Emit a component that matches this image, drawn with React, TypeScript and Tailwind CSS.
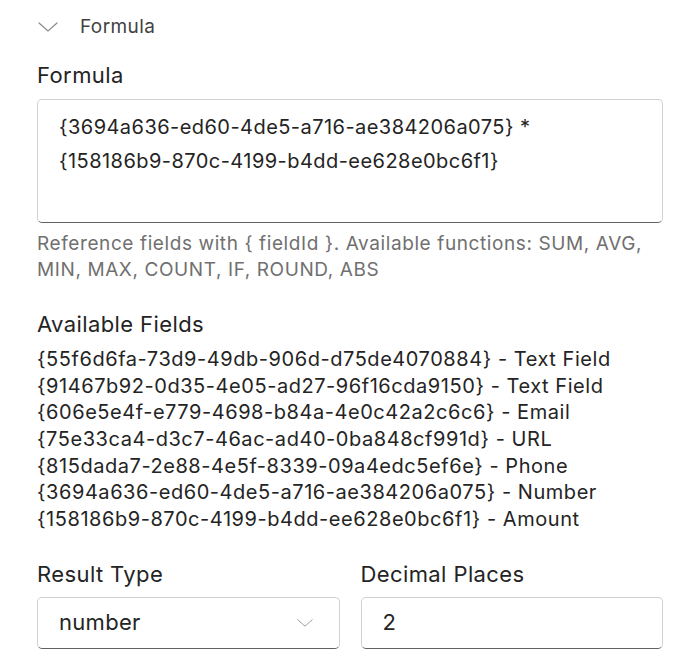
import React from 'react';

const FIELDS: [string, string][] = [
  ['55f6d6fa-73d9-49db-906d-d75de4070884', 'Text Field'],
  ['91467b92-0d35-4e05-ad27-96f16cda9150', 'Text Field'],
  ['606e5e4f-e779-4698-b84a-4e0c42a2c6c6', 'Email'],
  ['75e33ca4-d3c7-46ac-ad40-0ba848cf991d', 'URL'],
  ['815dada7-2e88-4e5f-8339-09a4edc5ef6e', 'Phone'],
  ['3694a636-ed60-4de5-a716-ae384206a075', 'Number'],
  ['158186b9-870c-4199-b4dd-ee628e0bc6f1', 'Amount'],
];

const HINT = 'Reference fields with { fieldId }. Available functions: SUM, AVG, MIN, MAX, COUNT, IF, ROUND, ABS';

function Chevron({className}: {className?: string}) {
  return (
    <svg viewBox="0 0 20 10" fill="none" stroke="currentColor" strokeWidth="1.2" strokeLinecap="round" className={className} aria-hidden="true">
      <path d="M1 1l9 8 9-8" />
    </svg>
  );
}

export default function App() {
  return (
    <div className="min-h-screen w-[700px] bg-white px-[37px] font-['Inter',sans-serif] text-[#242424]">
      {/* section header */}
      <div className="flex h-[54px] items-center gap-[22px]">
        <Chevron className="ml-[1px] h-[10px] w-[20px] text-[#8a8a8a]" />
        <span className="text-[19px] tracking-[0.4px] text-[#424242]">Formula</span>
      </div>

      <label className="block text-[22px] leading-[42px] tracking-[0.4px]">Formula</label>
      <div className="mt-[3px] h-[124px] rounded-[5px] border border-[#d1d1d1] border-b-[#616161] px-[21px] pt-[10px] text-[20px] leading-[34px] tracking-[0.45px]">
        {'{3694a636-ed60-4de5-a716-ae384206a075} *'}
        <br />
        {'{158186b9-870c-4199-b4dd-ee628e0bc6f1}'}
      </div>
      <p className="mt-[8px] text-[19px] leading-[26px] tracking-[0.6px] text-[#707070]">{HINT}</p>

      <div className="mt-[28px] text-[22px] leading-[26px] tracking-[0.4px]">Available Fields</div>
      <ul className="mt-[9px] text-[20px] leading-[26.67px] tracking-[0.55px]">
        {FIELDS.map(([id, name]) => (
          <li key={id}>{`{${id}} - ${name}`}</li>
        ))}
      </ul>

      <div className="mt-[28px] grid grid-cols-2 gap-[21px]">
        <div>
          <div className="text-[22px] leading-[26px] tracking-[0.4px]">Result Type</div>
          <div className="mt-[10px] flex h-[52px] items-center justify-between rounded-[5px] border border-[#d1d1d1] border-b-[#616161] pl-[21px] pr-[26px] text-[22px] tracking-[0.3px]">
            <span>number</span>
            <Chevron className="h-[8px] w-[16px] text-[#9a9a9a]" />
          </div>
        </div>
        <div>
          <div className="text-[22px] leading-[26px] tracking-[0.4px]">Decimal Places</div>
          <div className="mt-[10px] flex h-[52px] items-center rounded-[5px] border border-[#d1d1d1] border-b-[#616161] px-[21px] text-[22px]">
            2
          </div>
        </div>
      </div>
    </div>
  );
}
